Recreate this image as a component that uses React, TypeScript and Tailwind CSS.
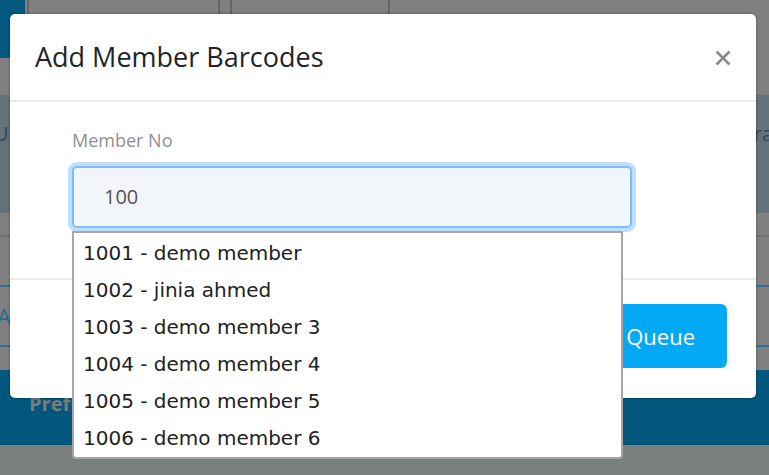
import React from 'react';

const members = [
  '1001 - demo member',
  '1002 - jinia ahmed',
  '1003 - demo member 3',
  '1004 - demo member 4',
  '1005 - demo member 5',
  '1006 - demo member 6',
];

const App: React.FC = () => {
  return (
    <div className="relative w-[769px] h-[475px] overflow-hidden bg-[#808080] font-['Open_Sans',sans-serif]">
      {/* page behind the modal (already dimmed) */}
      <div className="flex flex-col w-full h-full">
        <div className="flex h-[95px]">
          <div className="w-[25px] h-[58px] bg-[#03587d]" />
          <div className="flex flex-1 h-[14px]">
            <div className="w-[193px] border-l-2 border-r-2 border-[#666] ml-[2px]" />
            <div className="w-[160px] ml-[10px] border-l-2 border-r-2 border-[#666]" />
            <div className="flex-1" />
          </div>
        </div>
        <div className="flex items-center justify-between h-[118px] bg-[#647279] text-[20px] text-[#2d4a5c] pb-[40px]">
          <span className="-ml-[6px]">Ul</span>
          <span className="-mr-[4px]">ra</span>
        </div>
        <div className="h-[24px] border-b-2 border-[#707070]" />
        <div className="h-[48px]" />
        <div className="flex items-center h-[62px] border-y-2 border-[#2b6f94] text-[22px] text-[#1e6a95]">
          <span className="-ml-[3px]">A</span>
        </div>
        <div className="h-[23px]" />
        <div className="flex items-end h-[75px] bg-[#03577c] pl-[29px] pb-[26px]">
          <span className="text-[20px] font-bold text-[#7c7c7c]">Prefix</span>
        </div>
        <div className="flex-1 bg-[#7a7f7f]" />
      </div>

      {/* modal */}
      <div className="absolute left-[10px] top-[14px] w-[746px] h-[384px] bg-white rounded-[5px] shadow-[0_0_3px_rgba(0,0,0,0.4)] flex flex-col">
        <div className="flex items-center justify-between h-[88px] pl-[25px] pr-[24px] border-b-2 border-[#e9ecef]">
          <h2 className="text-[27px] text-[#212529] font-normal mt-[1px]">Add Member Barcodes</h2>
          <svg width="18" height="18" viewBox="0 0 18 18" className="mt-[2px]">
            <path d="M2.5 2.5 L15.5 15.5 M15.5 2.5 L2.5 15.5" stroke="#8a8a8a" strokeWidth="2.6" strokeLinecap="butt" />
          </svg>
        </div>
        <div className="flex flex-col h-[178px] pl-[62px] pt-[24px] border-b-2 border-[#e9ecef]">
          <label className="text-[18px] text-[#8f8f8f] leading-[28px]">Member No</label>
          <div className="mt-[12px] w-[560px] h-[62px] rounded-[5px] bg-[#f2f6fa] border-2 border-[#80bdff] shadow-[0_0_0_4px_rgba(0,123,255,0.25)] flex items-center pl-[30px]">
            <span className="text-[20px] text-[#555]">100</span>
          </div>
        </div>
        <div className="flex flex-1 justify-end items-start pt-[24px] pr-[29px]">
          <button className="h-[64px] px-[32px] rounded-[6px] bg-[#03a9f4] text-white text-[22px]">Add to Queue</button>
        </div>
      </div>

      {/* datalist popup */}
      <div className="absolute left-[72px] top-[231px] w-[551px] h-[228px] bg-white border-2 border-[#a6a6a6] rounded-b-[4px] pt-[1px] font-['DejaVu_Sans',sans-serif]">
        {members.map(m => (
          <div key={m} className="h-[37px] flex items-center pl-[9px] text-[20px] text-[#222]">
            {m}
          </div>
        ))}
      </div>
    </div>
  );
};

export default App;
